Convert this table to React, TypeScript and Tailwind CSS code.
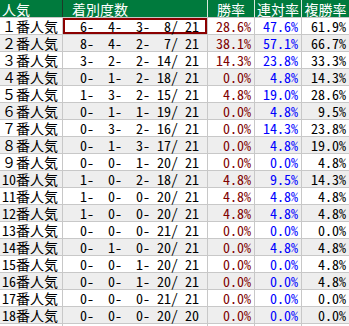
const rows: [number, number, number, number, number, string, string, string][] = [
  [6, 4, 3, 8, 21, '28.6%', '47.6%', '61.9%'],
  [8, 4, 2, 7, 21, '38.1%', '57.1%', '66.7%'],
  [3, 2, 2, 14, 21, '14.3%', '23.8%', '33.3%'],
  [0, 1, 2, 18, 21, '0.0%', '4.8%', '14.3%'],
  [1, 3, 2, 15, 21, '4.8%', '19.0%', '28.6%'],
  [0, 1, 1, 19, 21, '0.0%', '4.8%', '9.5%'],
  [0, 3, 2, 16, 21, '0.0%', '14.3%', '23.8%'],
  [0, 1, 3, 17, 21, '0.0%', '4.8%', '19.0%'],
  [0, 0, 1, 20, 21, '0.0%', '0.0%', '4.8%'],
  [1, 0, 2, 18, 21, '4.8%', '9.5%', '14.3%'],
  [1, 0, 0, 20, 21, '4.8%', '4.8%', '4.8%'],
  [1, 0, 0, 20, 21, '4.8%', '4.8%', '4.8%'],
  [0, 0, 0, 21, 21, '0.0%', '0.0%', '0.0%'],
  [0, 1, 0, 20, 21, '0.0%', '4.8%', '4.8%'],
  [0, 0, 1, 20, 21, '0.0%', '0.0%', '4.8%'],
  [0, 0, 1, 20, 21, '0.0%', '0.0%', '4.8%'],
  [0, 0, 0, 21, 21, '0.0%', '0.0%', '0.0%'],
  [0, 0, 0, 20, 20, '0.0%', '0.0%', '0.0%'],
];

const fullDigits = '０１２３４５６７８９';

const pad = (n: number) => String(n).padStart(3, ' ');

// 1-9 use full-width digits, 10+ half-width
const label = (i: number) => (i < 10 ? fullDigits[i] : String(i));

const num = "font-['Noto_Sans_CJK_JP',sans-serif] [font-feature-settings:'hwid']";

const App = () => {
  return (
    <div className="w-[349px] h-[326px] overflow-hidden bg-white text-[14px] leading-[16px] font-['Noto_Sans_CJK_JP',sans-serif]">
      {/* header */}
      <div className="flex h-[18px] bg-[#007a3d] text-white border-b border-[#c8c8c8]">
        <div className="w-[63px] pl-[2px] flex items-center border-r border-[#1e3a28]">人気</div>
        <div className="w-[145px] pl-[9px] flex items-center border-r border-[#d8e8dc]">着別度数</div>
        <div className="w-[47px] flex items-center justify-center border-r border-[#d8e8dc]">勝率</div>
        <div className="w-[47px] flex items-center justify-center border-r border-[#d8e8dc]">連対率</div>
        <div className="flex-1 flex items-center justify-center">複勝率</div>
      </div>

      {rows.map((r, i) => (
        <div
          key={i}
          className={`flex h-[17px] border-b border-[#c8c8c8] ${i % 2 === 1 ? 'bg-[#eeeeee]' : 'bg-white'}`}
        >
          <div className="w-[63px] pl-[2px] flex items-center whitespace-nowrap border-r border-[#c8c8c8] text-black">
            <span className={i < 9 ? '' : num}>{label(i + 1)}</span>
            <span>番人気</span>
          </div>
          <div
            className={`w-[145px] pr-[8px] flex items-center justify-end whitespace-pre border-r border-[#c8c8c8] text-black ${num} ${i === 0 ? 'shadow-[inset_0_0_0_2px_#8b0000]' : ''}`}
          >
            {`${pad(r[0])}-${pad(r[1])}-${pad(r[2])}-${pad(r[3])}/${pad(r[4])}`}
          </div>
          <div className={`w-[47px] pr-[3px] flex items-center justify-end border-r border-[#c8c8c8] text-[#800000] ${num}`}>{r[5]}</div>
          <div className={`w-[47px] pr-[3px] flex items-center justify-end border-r border-[#c8c8c8] text-[#0000ff] ${num}`}>{r[6]}</div>
          <div className={`flex-1 pr-[3px] flex items-center justify-end text-black ${num}`}>{r[7]}</div>
        </div>
      ))}

      {/* next row, cut off */}
      <div className="flex h-[17px]">
        <div className="w-[63px] border-r border-[#c8c8c8]"></div>
        <div className="w-[145px] border-r border-[#c8c8c8]"></div>
        <div className="w-[47px] border-r border-[#c8c8c8]"></div>
        <div className="w-[47px] border-r border-[#c8c8c8]"></div>
        <div className="flex-1"></div>
      </div>
    </div>
  );
};

export default App;
